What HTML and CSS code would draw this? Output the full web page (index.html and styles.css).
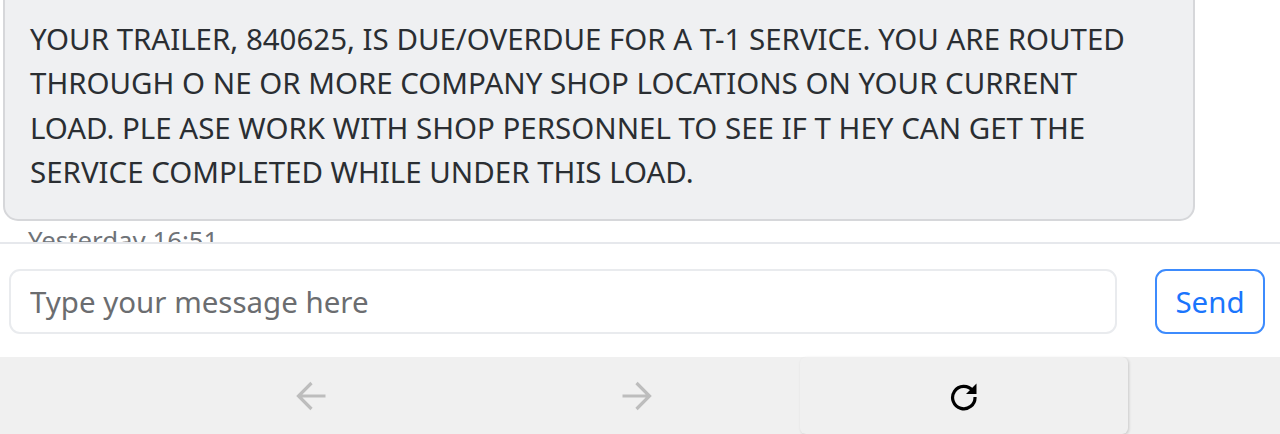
FILE: index.html
```html
<!DOCTYPE html>
<html lang="en">
<head>
    <meta charset="UTF-8">
    <title>Messages</title>
    <link rel="stylesheet" href="styles.css">
</head>
<body>
    <div class="messages">
        <div class="bubble">YOUR TRAILER, 840625, IS DUE/OVERDUE FOR A T-1 SERVICE. YOU ARE ROUTED<br>THROUGH O NE OR MORE COMPANY SHOP LOCATIONS ON YOUR CURRENT<br>LOAD. PLE ASE WORK WITH SHOP PERSONNEL TO SEE IF T HEY CAN GET THE<br>SERVICE COMPLETED WHILE UNDER THIS LOAD.</div>
        <div class="time">Yesterday 16:51</div>
    </div>

    <div class="composer">
        <input class="message-input" type="text" placeholder="Type your message here">
        <button class="send">Send</button>
    </div>

    <div class="toolbar">
        <div class="tool">
            <svg width="34" height="34" viewBox="0 0 34 34"><path d="M31.5 17H5M17.5 4 4.5 17l13 13" fill="none" stroke="#bdbdbd" stroke-width="3.2"/></svg>
        </div>
        <div class="tool">
            <svg width="34" height="34" viewBox="0 0 34 34"><path d="M2.5 17H29M16.5 4l13 13-13 13" fill="none" stroke="#bdbdbd" stroke-width="3.2"/></svg>
        </div>
        <div class="tool tool-active">
            <svg width="30" height="30" viewBox="0 0 30 30"><path d="M23.6 9.6A11.2 11.2 0 1 0 26 16" fill="none" stroke="#000" stroke-width="3.2"/><path d="M27.5 2.5V13H17z" fill="#000"/></svg>
        </div>
    </div>
</body>
</html>
```

FILE: styles.css
```css
body {
    font-family: "Noto Sans", sans-serif;
    margin: 0;
    background-color: #fff;
    color: #2a2e32;
    height: 434px;
    overflow: hidden;
}

.messages {
    height: 242px;
    overflow: hidden;
    border-bottom: 2px solid #e6e8ec;
}

.bubble {
    width: 1192px;
    box-sizing: border-box;
    margin: -10px 0 0 3px;
    padding: 25px 25px 24px;
    background-color: #eff0f2;
    border: 2px solid #d6d7da;
    border-radius: 0 0 15px 15px;
    font-size: 29.47px;
    line-height: 44.4px;
}

.time {
    margin: 0 0 0 28px;
    font-size: 25.8px;
    line-height: 38px;
    color: #6f7378;
}

.composer {
    display: flex;
    justify-content: space-between;
    padding: 25px 15px 23px 9px;
}

.message-input {
    width: 1108px;
    height: 65px;
    box-sizing: border-box;
    padding: 0 19px;
    border: 2px solid #e9ebee;
    border-radius: 11px;
    font-family: inherit;
    font-size: 29.47px;
    color: #212529;
    outline: none;
}

.message-input::placeholder {
    color: #6b6d70;
    opacity: 1;
}

.send {
    width: 110px;
    height: 65px;
    padding: 0;
    background: #fff;
    border: 2px solid #3d8bfd;
    border-radius: 11px;
    font-family: inherit;
    font-size: 29.47px;
    color: #1a75fd;
}

.toolbar {
    display: flex;
    height: 77px;
    padding-left: 148px;
    background-color: #f0f0f0;
}

.tool {
    width: 326px;
    display: flex;
    align-items: center;
    justify-content: center;
}

.tool-active {
    width: 328px;
    border-radius: 6px;
    box-shadow: 1px 1px 3px rgba(0, 0, 0, 0.16);
}
```
